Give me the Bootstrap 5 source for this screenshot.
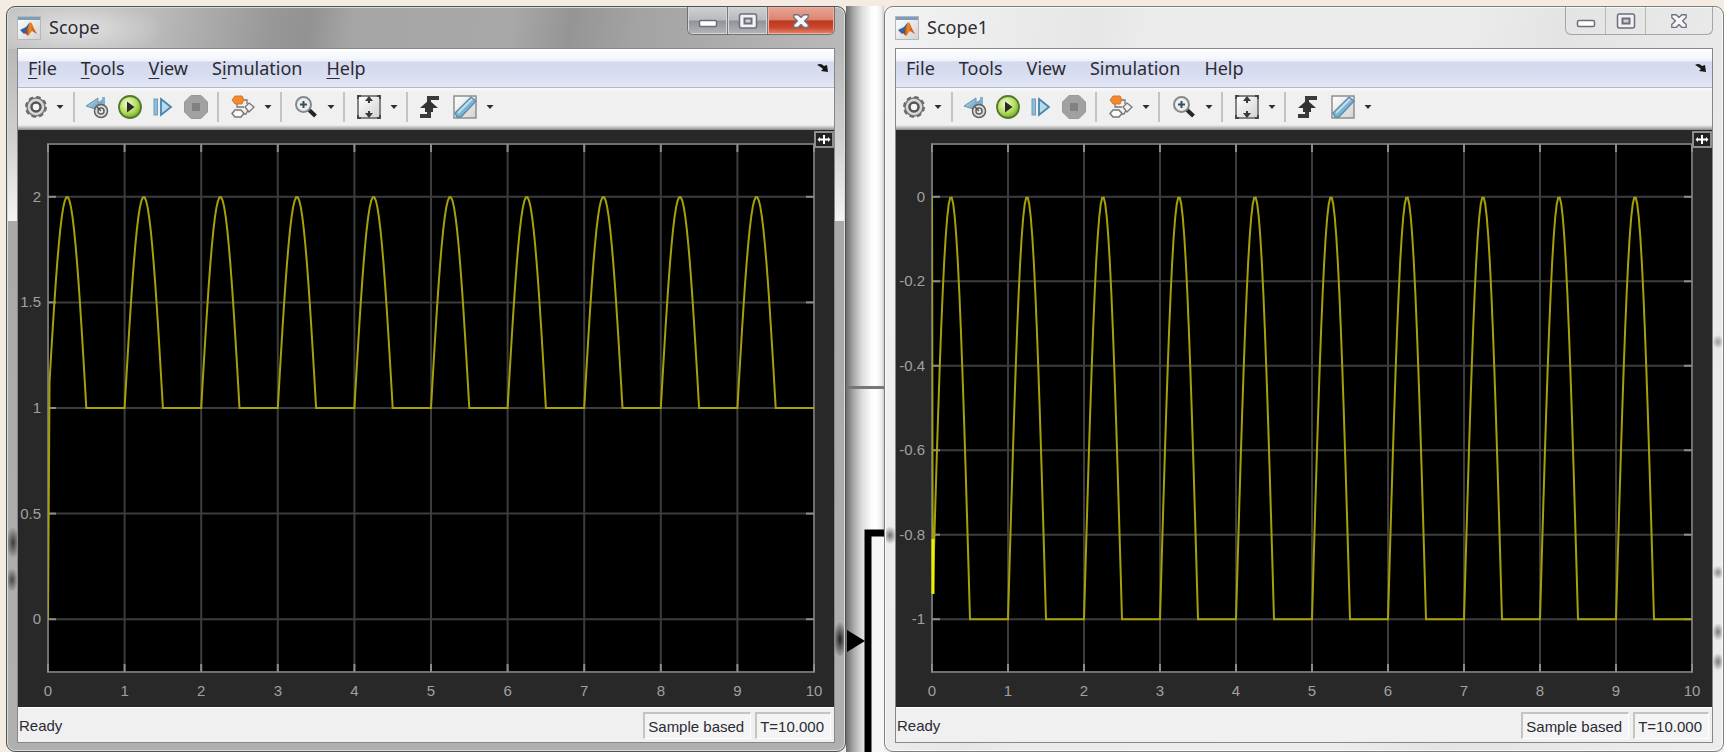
<!DOCTYPE html>
<html lang="en">
<head>
<meta charset="utf-8">
<meta name="viewport" content="width=device-width, initial-scale=1">
<title>Scope</title>
<link href="https://cdn.jsdelivr.net/npm/bootstrap@5.3.0/dist/css/bootstrap.min.css" rel="stylesheet">
<style>
  body { background: #f4ece2; font-family: "Noto Sans", "Open Sans", sans-serif; font-size: 18px; line-height: 22px; color: #2b2b35; }
  button { font: inherit; color: inherit; background: none; border: 0; padding: 0; }
  .desk { height: 100vh; min-height: 480px; padding: 6px 0 0 6px; }
  .gap-canvas { flex: 0 0 38px; background: linear-gradient(90deg, #6c6c6c, #a9a9a9 20%, #dcdcdc 42%, #fbfbfb 66%, #fff 80%, #ececec 94%, #c8c8c8); }
  .scope { flex: 1 1 0; min-width: 0; border: 1px solid #4e5452; border-radius: 9px; padding: 0 10px 8px; }
  .scope-active {
    background:
      radial-gradient(ellipse 7px 16px at 6px 72%, #3c3c3c, #3c3c3c00),
      radial-gradient(ellipse 6px 12px at 5px 77%, #484848, #48484800),
      radial-gradient(ellipse 7px 18px at calc(100% - 5px) 85%, #222, #2220),
      radial-gradient(ellipse 90px 30px at 68px 22px, #e2e2e2, #e2e2e200) top / 100% 42px no-repeat,
      linear-gradient(98deg, #c2c2c2 0%, #bcbcbc 17%, #979797 32%, #929292 36%, #a5a5a5 41%, #a8a8a8 60%, #959595 67%, #a3a3a3 75%, #b9b9b9 100%) top / 100% 42px no-repeat,
      linear-gradient(#b8b8b8 42px, #cfcfcf 130px, #f4f4f4 214px, #a9a9a9 214px, #b0b0b0);
    box-shadow: inset 0 0 0 1px #d8dcda;
  }
  .scope-idle {
    background:
      radial-gradient(ellipse 7px 9px at 5px 71%, #707070, #70707000),
      radial-gradient(ellipse 6px 7px at calc(100% - 5px) 45%, #9a9a9a, #9a9a9a00),
      radial-gradient(ellipse 6px 7px at calc(100% - 5px) 76%, #8c8c8c, #8c8c8c00),
      radial-gradient(ellipse 6px 9px at calc(100% - 5px) 84%, #7c7c7c, #7c7c7c00),
      radial-gradient(ellipse 6px 9px at calc(100% - 5px) 88%, #7c7c7c, #7c7c7c00),
      linear-gradient(100deg, #f3f3f3, #e6e6e6 22%, #ebebeb 27%, #ececec 60%, #e4e4e4 70%, #ededed);
    box-shadow: inset 0 0 0 1px #fafafa; border-color: #7b7f7e;
  }
  .titlebar { height: 41px; flex: none; padding-top: 9px; }
  .caption-group { height: 28px; margin-top: -9px; border: 1px solid #6f7075; border-top: 0; border-radius: 0 0 6px 6px; overflow: hidden; }
  .caption-group button { width: 40px; border-right: 1px solid #77787c; display: flex; align-items: center; justify-content: center; }
  .caption-group button:last-child { width: 66px; border-right: 0; }
  .scope-active .caption-group button { background: linear-gradient(#cfd0d2, #b9babd 48%, #929398 52%, #b4b5b9); box-shadow: inset 0 0 0 1px #d6d6d8; }
  .scope-active .caption-group button:last-child { background: linear-gradient(#eaa596, #dc8673 46%, #bd3a22 52%, #c9452a 75%, #e28a6e); box-shadow: inset 0 0 0 1px #eab3a6; }
  .scope-idle .caption-group { border-color: #a4a6a8; }
  .scope-idle .caption-group button { border-color: #b5b7b9; }
  .client { border: 1px solid #85888a; background: #f0f0f0; min-height: 0; }
  .menubar { height: 39px; flex: none; padding: 0 5px 0 10px; border-bottom: 1px solid #b4b7c4; background: linear-gradient(#fff, #f0f4fb 30%, #d4d9ed 34%, #d8ddf0 70%, #e3e8f7); }
  .m-item { margin-right: 24px; }
  .m-item u { text-underline-offset: 3px; text-decoration-thickness: 1px; }
  .toolstrip { height: 42px; flex: none; padding: 0 0 4px 1px; background: linear-gradient(#fafafa, #f0f0f0 10%, #f0f0f0 88%, #d0d0d0 92%, #8a8a8a); }
  .toolstrip button, .sep { display: flex; justify-content: center; align-items: center; flex: none; }
  .t33 { width: 33px; } .t37 { width: 37px; } .t14 { width: 14px; } .t16 { width: 16px; }
  .sep { width: 12px; }
  .sep::before { content: ""; width: 2px; height: 30px; background: #c3c3c3; }
  .plot { position: relative; background: #282828; padding: 14px 20px 35px 30px; min-height: 0; }
  .scope-idle .plot { padding-left: 36px; }
  .plot svg.axes { overflow: visible; min-height: 0; min-width: 0; width: 100%; height: 100%; }
  .axes text { font-family: "Liberation Sans", Arial, sans-serif; font-size: 15px; fill: #a0a0a0; }
  .corner { position: absolute; top: 1px; right: 0; line-height: 0; }
  .statusbar { height: 35px; flex: none; border-top: 1px solid #fff; font-family: "Liberation Sans", Arial, sans-serif; font-size: 15px; padding: 4px 3px 3px 1px; }
  .status-cell { border: 1px solid #c4c4c4; border-width: 2px 1px 1px 2px; border-right-color: #fff; border-bottom-color: #fff; background: #f4f4f4; height: 27px; padding: 2px 6px 0 3px; }
</style>
</head>
<body>
<svg width="0" height="0" class="position-absolute" aria-hidden="true">
  <defs>
    <linearGradient id="gBlue" x1="0" y1="0" x2="1" y2="1"><stop offset="0" stop-color="#bcdcee"/><stop offset="1" stop-color="#4a86ad"/></linearGradient>
    <radialGradient id="gGreen" cx=".4" cy=".35" r=".7"><stop offset="0" stop-color="#f2fcd8"/><stop offset=".6" stop-color="#b2dc5c"/><stop offset="1" stop-color="#6aa51e"/></radialGradient>
    <linearGradient id="gPaper" x1="0" y1="0" x2="1" y2="1"><stop offset="0" stop-color="#fff"/><stop offset="1" stop-color="#d2d2d2"/></linearGradient>
    <linearGradient id="gFlame" x1="0" y1="0" x2="1" y2="0"><stop offset="0" stop-color="#8a2413"/><stop offset=".4" stop-color="#f08a24"/><stop offset="1" stop-color="#c23c12"/></linearGradient>
  </defs>
  <symbol id="i-app" viewBox="0 0 24 24"><rect x=".5" y=".5" width="23" height="23" fill="url(#gPaper)" stroke="#b5b8bb"/><path d="M1 1h22v3H1z" fill="#7d9dbb"/><path d="M3 14l6-3 4-5-2 9-4 3z" fill="#2b64a8"/><path d="M8 17c2-3 3-8 6-11 2 3 3 8 6 12l-5-3-4 5z" fill="url(#gFlame)"/></symbol>
  <symbol id="i-min" viewBox="0 0 20 20"><rect x="1.5" y="9.500" width="17" height="6" rx="1.500" fill="#fff" stroke="#6c6e7c" stroke-width="1.500"/></symbol>
  <symbol id="i-max" viewBox="0 0 20 20"><rect x="1.500" y="3" width="17" height="14" rx="2" fill="#f2f2f4" stroke="#6c6e7c" stroke-width="1.500"/><rect x="6.500" y="7.500" width="7" height="5" fill="#d0d1d6" stroke="#6c6e7c" stroke-width="2"/></symbol>
  <symbol id="i-close" viewBox="0 0 20 20"><path d="M2 3h5l3 3 3-3h5v3l-4 4 4 4v3h-5l-3-3-3 3H2v-3l4-4-4-4z" fill="#f6f6f8" stroke="#70717f" stroke-width="1.500" stroke-linejoin="round"/></symbol>
  <symbol id="i-dock" viewBox="0 0 12 10"><path d="M0 2C3 0 5 1 7 3l3-1 1 7-7-1 2-2C4 4 2 3 0 2z" fill="#161616"/></symbol>
  <symbol id="i-down" viewBox="0 0 8 6"><path d="M.5 1h7L4 5z" fill="#2e2e2e"/></symbol>
  <symbol id="i-gear" viewBox="0 0 24 24"><circle cx="12" cy="12" r="9" fill="#d8d8d8" stroke="#777" stroke-width="1.500"/><circle cx="12" cy="12" r="10" fill="none" stroke="#6a6a6a" stroke-width="2" stroke-dasharray="4.500 3.354"/><circle cx="12" cy="12" r="4.500" fill="#f6f6f6" stroke="#555" stroke-width="2.500"/></symbol>
  <symbol id="i-back" viewBox="0 0 24 24"><path d="M1 11L13 3v5l6-4v14l-6-3z" fill="url(#gBlue)" stroke="#6794b2"/><path d="M17 2h3v10h-3z" fill="#7eb0d0"/><circle cx="16" cy="16" r="6.500" fill="#dcdcdc" stroke="#606060" stroke-width="1.500"/><circle cx="16" cy="16" r="3" fill="#eee" stroke="#606060" stroke-width="1.500"/><path d="M12 12l4 4" stroke="#505050" stroke-width="1.500"/></symbol>
  <symbol id="i-play" viewBox="0 0 24 24"><circle cx="12" cy="12" r="11" fill="url(#gGreen)" stroke="#54782b" stroke-width="1.800"/><path d="M9 6.500l7.500 5.500L9 17.500z" fill="#2b2b26"/></symbol>
  <symbol id="i-step" viewBox="0 0 24 24"><rect x="3" y="4" width="3.500" height="16" fill="#8dbdd9" stroke="#6d9cbc"/><path d="M10 4L20 12l-10 8z" fill="#b8daec" stroke="#4a83aa" stroke-width="1.800"/></symbol>
  <symbol id="i-stop" viewBox="0 0 24 24"><path d="M7 .5h10L23.500 7v10L17 23.500H7L.5 17V7z" fill="#a1a1a1" stroke="#999" stroke-linejoin="round"/><rect x="8" y="8" width="8" height="8" fill="#818181"/></symbol>
  <symbol id="i-blocks" viewBox="0 0 24 24"><path d="M12 5h4v4M12 19h3l2-4M6 9v3h7" fill="none" stroke="#777" stroke-width="1.300"/><path d="M4 1h7l2 3.500L11 9H4L1 5z" fill="#f08a2c" stroke="#d87a2c"/><path d="M18 8l5 4-5 5-4-5z" fill="#f2f2f2" stroke="#777" stroke-width="1.300"/><path d="M4 15h6l3 3.500-3 3.500H4l-3-3.500z" fill="#fafafa" stroke="#777" stroke-width="1.500"/></symbol>
  <symbol id="i-zoom" viewBox="0 0 24 24"><path d="M14 14l7.500 7" stroke="#252525" stroke-width="4"/><circle cx="9.500" cy="9.500" r="7.500" fill="#e8f0f4" stroke="#888" stroke-width="2"/><path d="M9.500 6v7M6 9.500h7" stroke="#3c4c58" stroke-width="2"/></symbol>
  <symbol id="i-fit" viewBox="0 0 24 24"><rect x="1" y="1" width="22" height="22" fill="url(#gPaper)" stroke="#777" stroke-width="1.800"/><path d="M1 4V1h3M20 1h3v3M1 20v3h3M20 23h3v-3" fill="none" stroke="#444" stroke-width="1.800"/><path d="M12 1l4 5h-3v2h-2V6H8zM12 23l4-5h-3v-2h-2v2H8z" fill="#3a3a3a"/></symbol>
  <symbol id="i-trig" viewBox="0 0 24 24"><path d="M2 21h9V3h10" fill="none" stroke="#3a3a3a" stroke-width="4"/><path d="M11 5l9 8h-5v4H7v-4H2z" fill="#333"/></symbol>
  <symbol id="i-measure" viewBox="0 0 24 24"><rect x="1" y="1" width="22" height="22" fill="url(#gPaper)" stroke="#8e8e8e" stroke-width="1.500"/><path d="M2 18L18 2l5 4L8 22H4z" fill="#7fb3d3" stroke="#5c8cac" stroke-width="1.300"/><path d="M5 18L19 4" stroke="#c2dfee" stroke-width="2"/></symbol>
  <symbol id="i-corner" viewBox="0 0 20 17"><rect x="1" y="1" width="18" height="15" fill="#222" stroke="#8e8e8e" stroke-width="2"/><path d="M10 4v9M6 8.500h8" stroke="#fff" stroke-width="2"/><path d="M6 6v5L3.500 8.500zM14 6v5l2.500-2.500z" fill="#fff"/></symbol>
</svg>

<main class="desk d-flex overflow-hidden">
  <section class="scope scope-active d-flex flex-column" aria-label="Scope">
    <header class="titlebar d-flex align-items-start">
      <svg width="24" height="24"><use href="#i-app"/></svg>
      <span class="ms-2">Scope</span>
      <div class="caption-group d-flex ms-auto">
        <button aria-label="Minimize"><svg width="20" height="20"><use href="#i-min"/></svg></button>
        <button aria-label="Maximize"><svg width="20" height="20"><use href="#i-max"/></svg></button>
        <button aria-label="Close"><svg width="18" height="18"><use href="#i-close"/></svg></button>
      </div>
    </header>
    <div class="client d-flex flex-column flex-grow-1">
      <nav class="menubar d-flex align-items-center">
        <button class="m-item"><u>F</u>ile</button><button class="m-item"><u>T</u>ools</button><button class="m-item"><u>V</u>iew</button><button class="m-item">S<u>i</u>mulation</button><button class="m-item"><u>H</u>elp</button>
        <button class="ms-auto d-flex" aria-label="Dock"><svg width="12" height="10"><use href="#i-dock"/></svg></button>
      </nav>
      <div class="toolstrip d-flex" role="toolbar"></div>
      <div class="plot d-flex flex-grow-1"><svg class="axes" data-ticks="2 1.5 1 0.5 0" data-min="-0.25" data-max="2.25" data-offset="1"></svg>
        <button class="corner" aria-label="Expand axes"><svg width="20" height="17"><use href="#i-corner"/></svg></button></div>
      <footer class="statusbar d-flex align-items-center"><span class="me-auto">Ready</span><span class="status-cell me-1">Sample based</span><span class="status-cell">T=10.000</span></footer>
    </div>
  </section>

  <svg class="gap-canvas" height="100%" aria-hidden="true">
    <path d="M0 381.500h38" stroke="#777" stroke-width="3"/>
    <path d="M38 527H22V1600" fill="none" stroke="#000" stroke-width="7"/>
    <path d="M26 531h12v1069H26z" fill="#f6f6f6"/>
    <path d="M1 624l18 11L1 646z" fill="#000"/>
  </svg>

  <section class="scope scope-idle d-flex flex-column" aria-label="Scope1">
    <header class="titlebar d-flex align-items-start">
      <svg width="24" height="24"><use href="#i-app"/></svg>
      <span class="ms-2">Scope1</span>
      <div class="caption-group d-flex ms-auto">
        <button aria-label="Minimize"><svg width="20" height="20"><use href="#i-min"/></svg></button>
        <button aria-label="Maximize"><svg width="20" height="20"><use href="#i-max"/></svg></button>
        <button aria-label="Close"><svg width="18" height="18"><use href="#i-close"/></svg></button>
      </div>
    </header>
    <div class="client d-flex flex-column flex-grow-1">
      <nav class="menubar d-flex align-items-center">
        <button class="m-item">File</button><button class="m-item">Tools</button><button class="m-item">View</button><button class="m-item">Simulation</button><button class="m-item">Help</button>
        <button class="ms-auto d-flex" aria-label="Dock"><svg width="12" height="10"><use href="#i-dock"/></svg></button>
      </nav>
      <div class="toolstrip d-flex" role="toolbar"></div>
      <div class="plot d-flex flex-grow-1"><svg class="axes" data-ticks="0 -0.2 -0.4 -0.6 -0.8 -1" data-min="-1.125" data-max="0.125" data-offset="-1"></svg>
        <button class="corner" aria-label="Expand axes"><svg width="20" height="17"><use href="#i-corner"/></svg></button></div>
      <footer class="statusbar d-flex align-items-center"><span class="me-auto">Ready</span><span class="status-cell me-1">Sample based</span><span class="status-cell">T=10.000</span></footer>
    </div>
  </section>
</main>

<script src="https://cdn.jsdelivr.net/npm/bootstrap@5.3.0/dist/js/bootstrap.bundle.min.js"></script>
<script>
  // Both scopes share one tool strip: [icon, label, width class], "|" is a separator, "v" and "V" are drop-down arrows.
  const tools = [['gear','Configuration','t33'],'V','|',['back','Step back','t33'],['play','Run','t33'],['step','Step forward','t33'],['stop','Stop','t33'],'|',
    ['blocks','Highlight block','t37'],'v','|',['zoom','Zoom','t37'],'v','|',['fit','Scale axes','t37'],'v','|',['trig','Triggers','t33'],['measure','Measurements','t37'],'v'];
  document.querySelectorAll('.toolstrip').forEach(bar => {
    bar.innerHTML = tools.map(t => t === '|' ? '<span class="sep"></span>'
      : t === 'v' || t === 'V' ? `<button class="${t === 'v' ? 't14' : 't16'}" aria-label="More"><svg width="8" height="6"><use href="#i-down"/></svg></button>`
      : `<button class="${t[2]}" aria-label="${t[1]}"><svg width="24" height="24"><use href="#i-${t[0]}"/></svg></button>`).join('');
  });

  // Axes, grid and the half-wave rectified sine of each scope.
  document.querySelectorAll('.axes').forEach(svg => {
    const lo = +svg.dataset.min, hi = +svg.dataset.max, off = +svg.dataset.offset;
    const py = v => (hi - v) / (hi - lo) * 100;
    let s = '<rect width="100%" height="100%" fill="#000"/>';
    for (let i = 1; i < 10; i++) s += `<line x1="${i*10}%" x2="${i*10}%" y1="0" y2="100%" stroke="#3c3c3c" stroke-width="2"/>`;
    const ticks = svg.dataset.ticks.split(' ');
    ticks.forEach(t => s += `<line x1="0" x2="100%" y1="${py(t)}%" y2="${py(t)}%" stroke="#3c3c3c" stroke-width="2"/>`);
    s += '<rect width="100%" height="100%" fill="none" stroke="#707070" stroke-width="2"/>';
    for (let i = 0; i <= 10; i++) {
      s += `<svg x="${i*10}%" y="0" overflow="visible"><line y2="8" stroke="#8c8c8c" stroke-width="2"/></svg>`;
      s += `<svg x="${i*10}%" y="100%" overflow="visible"><line y2="-8" stroke="#8c8c8c" stroke-width="2"/><text y="24" text-anchor="middle">${i}</text></svg>`;
    }
    ticks.forEach(t => {
      s += `<svg x="0" y="${py(t)}%" overflow="visible"><line x2="8" stroke="#8c8c8c" stroke-width="2"/><text x="-7" y="5" text-anchor="end">${t}</text></svg>`;
      s += `<svg x="100%" y="${py(t)}%" overflow="visible"><line x2="-8" stroke="#8c8c8c" stroke-width="2"/></svg>`;
    });
    const pts = [[0, py(0)]];
    if (off < 0) pts.push([0.1, py(-0.94)]);
    for (let k = 1; k <= 500; k++) {
      const t = k * 0.02;
      pts.push([t * 10, py(off + Math.max(0, Math.sin(2 * Math.PI * t)))]);
    }
    s += `<svg width="100%" height="100%" viewBox="0 0 100 100" preserveAspectRatio="none"><polyline points="${pts.map(p => p[0].toFixed(2) + ',' + p[1].toFixed(3)).join(' ')}" fill="none" stroke="#a5a10a" stroke-width="2" vector-effect="non-scaling-stroke"/></svg>`;
    if (off < 0) s += `<line x1="1" x2="1" y1="${py(-0.81)}%" y2="${py(-0.94)}%" stroke="#f2ee00" stroke-width="3"/>`;
    svg.innerHTML = s;
  });
</script>
</body>
</html>
